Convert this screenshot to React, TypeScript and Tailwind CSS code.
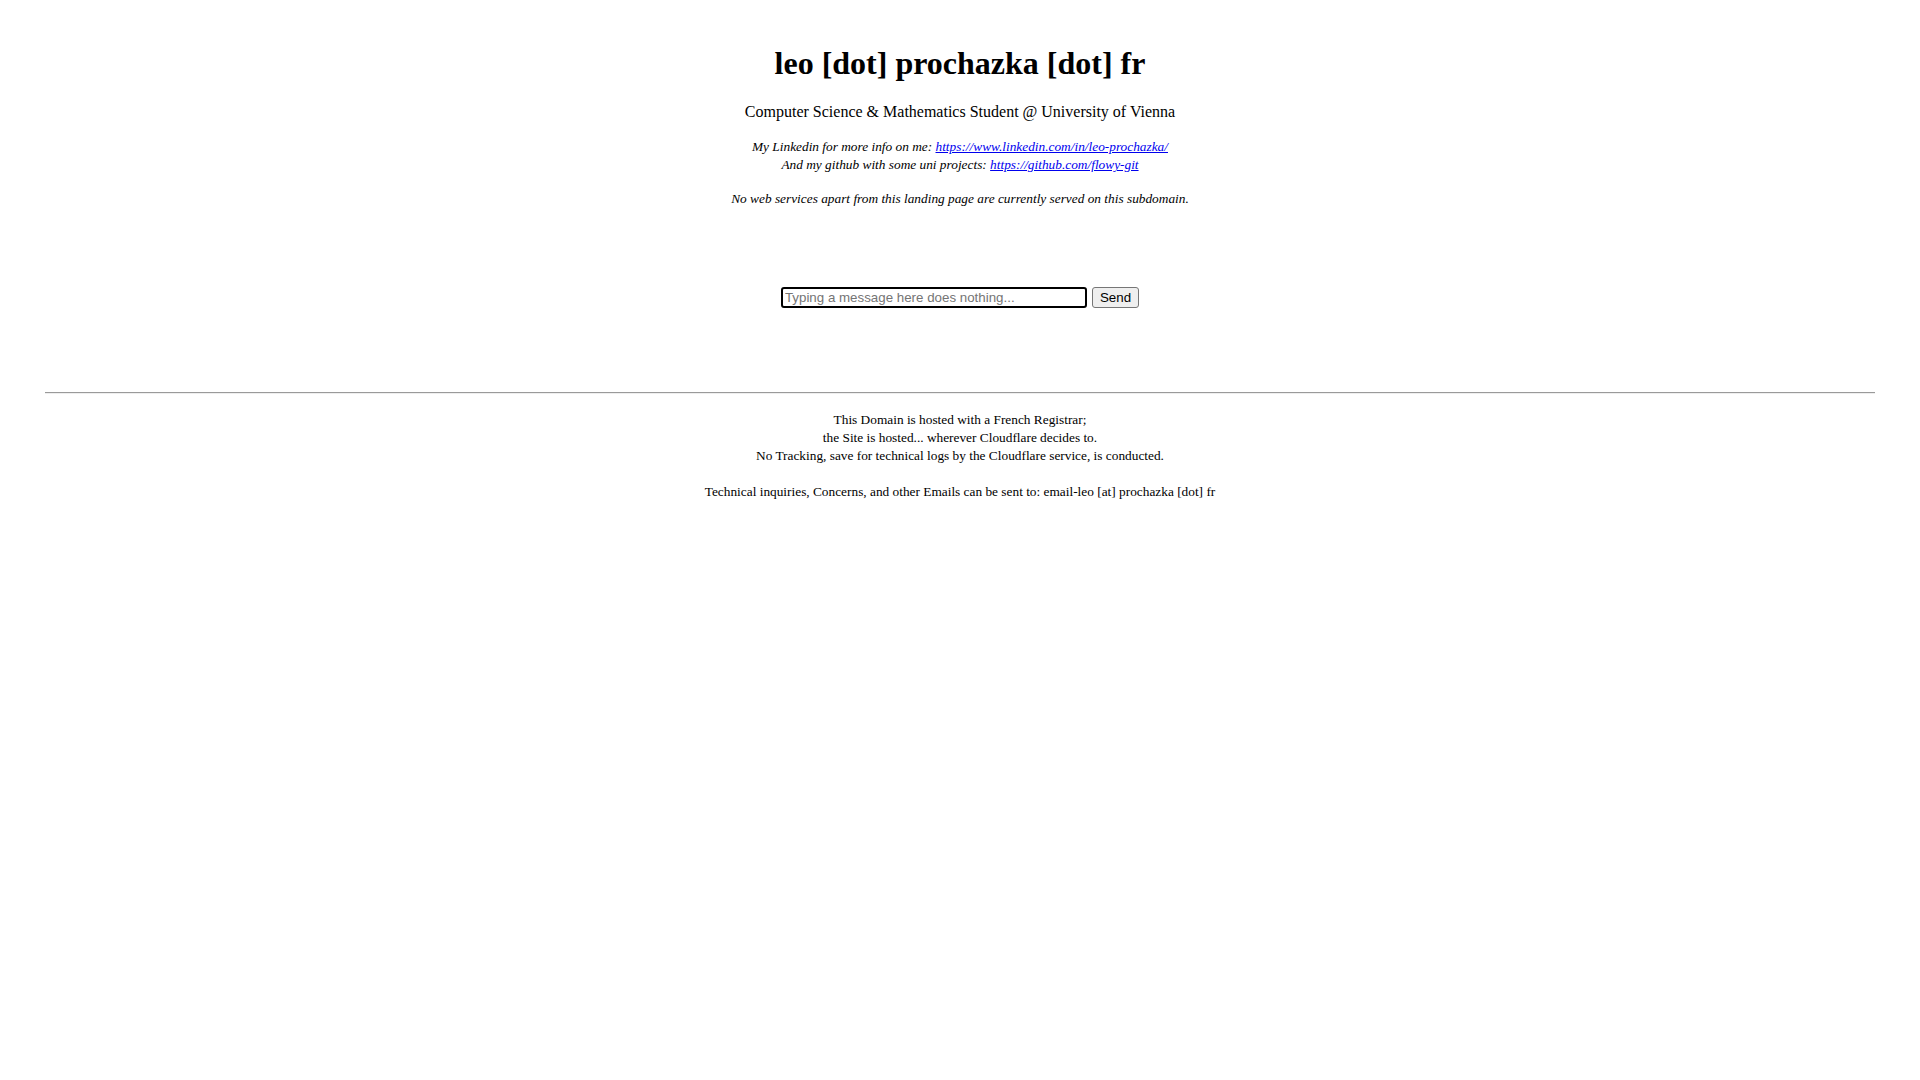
import React from 'react';

export default function App() {
  return (
    <div className="min-h-screen bg-white text-black text-center font-['Liberation_Serif',_'Times_New_Roman',_serif]">
      <div className="flex flex-col items-center">
        <h1 className="mt-[45px] text-[32px] leading-[37px] font-bold">leo [dot] prochazka [dot] fr</h1>

        <p className="mt-[21px] text-[16px] leading-[18px]">
          Computer Science &amp; Mathematics Student @ University of Vienna
        </p>

        <div className="mt-[17px] text-[13.33px] leading-[18px] italic">
          <div>
            My Linkedin for more info on me:{' '}
            <a href="#" className="text-[#0000ee] underline">
              https://www.linkedin.com/in/leo-prochazka/
            </a>
          </div>
          <div>
            And my github with some uni projects:{' '}
            <a href="#" className="text-[#0000ee] underline">
              https://github.com/flowy-git
            </a>
          </div>
        </div>

        <p className="mt-[16px] text-[13.33px] leading-[18px] italic">
          No web services apart from this landing page are currently served on this subdomain.
        </p>

        <div className="mt-[79px] flex items-center gap-[5px] font-['Liberation_Sans',_Arial,_sans-serif] text-[13.33px]">
          <input
            type="text"
            placeholder="Typing a message here does nothing..."
            className="w-[306px] h-[21px] px-[2px] border-2 border-black rounded-[3px] outline-none placeholder:text-[#757575]"
          />
          <button
            type="button"
            className="h-[21px] px-[7px] bg-[#efefef] border border-[#767676] rounded-[3px] leading-none"
          >
            Send
          </button>
        </div>
      </div>

      <hr className="mt-[84px] mx-[45px] h-0 border-t border-b border-t-[#9a9a9a] border-b-[#eeeeee]" />

      <div className="mt-[17px] text-[13.33px] leading-[18px]">
        <div>This Domain is hosted with a French Registrar;</div>
        <div>the Site is hosted... wherever Cloudflare decides to.</div>
        <div>No Tracking, save for technical logs by the Cloudflare service, is conducted.</div>
        <div className="mt-[18px]">
          Technical inquiries, Concerns, and other Emails can be sent to: email-leo [at] prochazka [dot] fr
        </div>
      </div>
    </div>
  );
}
